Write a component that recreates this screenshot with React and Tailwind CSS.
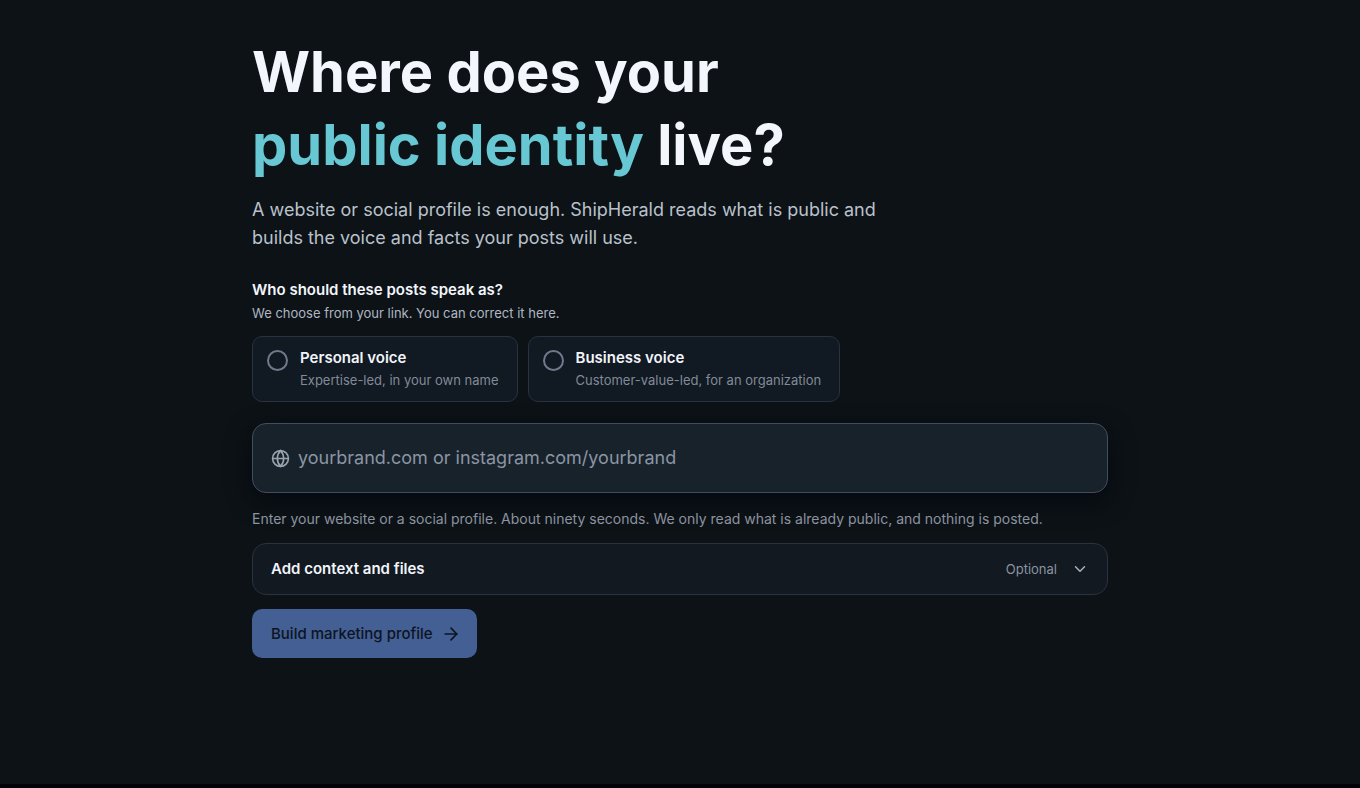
import { useState } from "react";
import { Globe, ChevronDown, ArrowRight } from "lucide-react";

const voices = [
  { id: "personal", title: "Personal voice", detail: "Expertise-led, in your own name" },
  { id: "business", title: "Business voice", detail: "Customer-value-led, for an organization" },
];

function VoiceOption({ voice, checked, onChange }) {
  return (
    <label
      htmlFor={voice.id}
      className="flex cursor-pointer items-start gap-3 rounded-[10px] border border-[#29323e] bg-[#111922] py-2.5 pr-[18px] pl-3.5"
    >
      <input
        id={voice.id}
        type="radio"
        name="voice"
        checked={checked}
        onChange={onChange}
        className="mt-[3px] size-[21px] shrink-0 appearance-none rounded-full border-2 border-[#707a8b] checked:border-[6px] checked:border-[#67c7d2]"
      />
      <span className="flex flex-col">
        <span className="text-[15px] leading-[22px] font-semibold text-[#f1f4fa]">{voice.title}</span>
        <span className="text-[13px] leading-[22px] text-[#818a98]">{voice.detail}</span>
      </span>
    </label>
  );
}

export default function App() {
  const [voice, setVoice] = useState("");
  const [url, setUrl] = useState("");
  const [open, setOpen] = useState(false);

  return (
    <div className="flex min-h-screen flex-col border-b-4 border-[#030207] bg-[#0c1216] font-['Inter','Liberation_Sans',sans-serif]">
      <main className="mx-auto w-full max-w-[856px] pt-9 pb-12">
        <h1 className="text-[56px] leading-[73px] font-bold text-[#f3f6fc]">
          Where does your
          <br />
          <span className="text-[#67c7d2]">public identity</span> live?
        </h1>
        <p className="mt-3.5 max-w-[640px] text-lg leading-7 text-[#bac1cc]">
          A website or social profile is enough. ShipHerald reads what is public and builds the voice and facts your
          posts will use.
        </p>

        <form onSubmit={(e) => e.preventDefault()}>
          <fieldset className="mt-[26px]">
            <legend className="text-[15px] leading-6 font-semibold text-[#f3f6fc]">Who should these posts speak as?</legend>
            <p className="text-[13px] leading-[22px] text-[#b0b7c3]">We choose from your link. You can correct it here.</p>
            <div className="mt-3 flex flex-wrap gap-2.5">
              {voices.map((v) => (
                <VoiceOption key={v.id} voice={v} checked={voice === v.id} onChange={() => setVoice(v.id)} />
              ))}
            </div>
          </fieldset>

          <label
            htmlFor="source"
            className="mt-[21px] flex h-[70px] items-center gap-2 rounded-[14px] border border-[#434d5c] bg-[#18222b] px-[18px] shadow-[0_8px_24px_rgba(3,5,14,0.7)]"
          >
            <Globe size={19} strokeWidth={2} className="shrink-0 text-[#9aa4b1]" aria-hidden="true" />
            <input
              id="source"
              type="text"
              aria-label="Website or social profile"
              value={url}
              onChange={(e) => setUrl(e.target.value)}
              placeholder="yourbrand.com or instagram.com/yourbrand"
              className="min-w-0 flex-1 bg-transparent text-lg leading-7 text-[#f3f6fc] outline-none placeholder:text-[#8b95a3]"
            />
          </label>
          <p className="mt-3.5 text-sm leading-6 text-[#8b93a0]">
            Enter your website or a social profile. About ninety seconds. We only read what is already public, and
            nothing is posted.
          </p>

          <button
            type="button"
            aria-expanded={open}
            onClick={() => setOpen(!open)}
            className="mt-3 flex h-[52px] w-full items-center rounded-[14px] border border-[#29323e] bg-[#121921] px-[18px] text-left"
          >
            <span className="flex-1 text-[15px] leading-6 font-semibold text-[#f1f4fa]">Add context and files</span>
            <span className="text-[13px] leading-6 text-[#8b93a0]">Optional</span>
            <ChevronDown size={18} strokeWidth={2} className="ml-3.5 text-[#a9b1bd]" aria-hidden="true" />
          </button>

          <button
            type="submit"
            className="mt-3.5 flex h-[49px] items-center gap-2 rounded-[10px] bg-[#435f93] pr-4 pl-[19px] text-[15px] leading-6 font-medium text-[#0c1421]"
          >
            Build marketing profile
            <ArrowRight size={20} strokeWidth={2} aria-hidden="true" />
          </button>
        </form>
      </main>
    </div>
  );
}
